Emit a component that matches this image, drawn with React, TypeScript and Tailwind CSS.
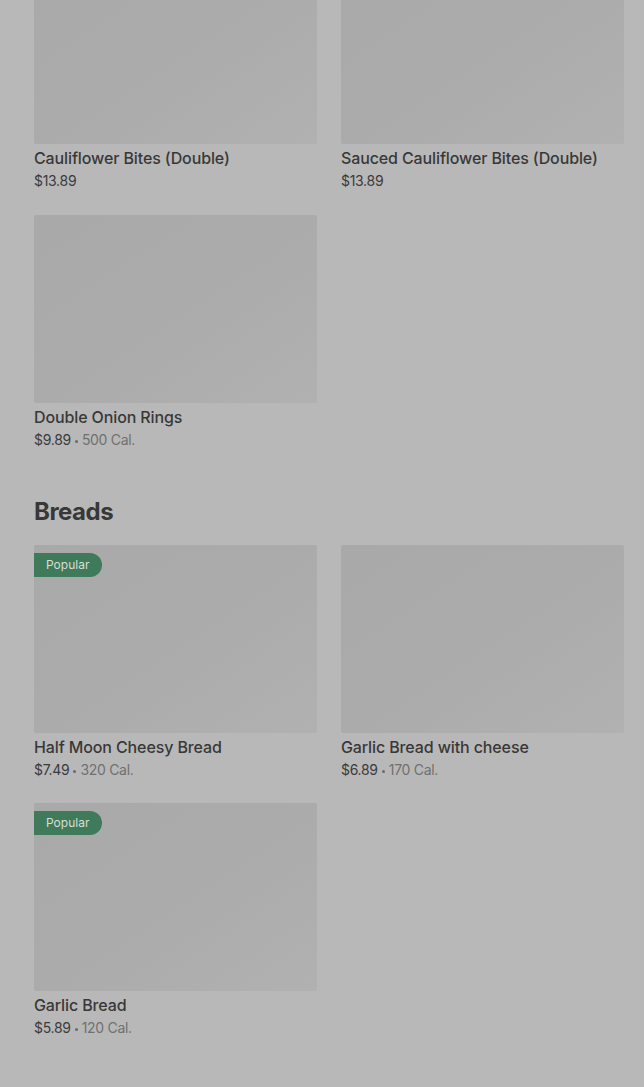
import React from "react";

type Item = { name: string; price: string; cal?: string; popular?: boolean };

const Card = ({ item }: { item: Item }) => (
  <div className="flex flex-col">
    <div className="relative h-[188px] w-full rounded-[2px] bg-gradient-to-br from-[#a9a9a9] via-[#ababab] to-[#b1b1b1]">
      {item.popular && (
        <div className="absolute left-0 top-[8px] flex h-[24px] items-center rounded-r-full bg-[#3f7a5b] pl-[12px] pr-[13px] text-[12px] text-[#d6dfda]">
          Popular
        </div>
      )}
    </div>
    <div className="pt-[3px]">
      <div className="h-[22px] text-[16px] font-medium leading-[22px] tracking-[-0.12px] text-[#383838]">{item.name}</div>
      <div className="h-[23px] text-[14px] leading-[24px] tracking-[-0.3px] text-[#3b3b3b]">
        {item.price}
        {item.cal && (
          <span className="text-[#707070]">
            <span className="mx-[4px] inline-block h-[3px] w-[3px] rounded-full bg-[#6a6a6a] align-middle" />
            {item.cal}
          </span>
        )}
      </div>
    </div>
  </div>
);

export default function App() {
  const top: Item[] = [
    { name: "Cauliflower Bites (Double)", price: "$13.89" },
    { name: "Sauced Cauliflower Bites (Double)", price: "$13.89" },
    { name: "Double Onion Rings", price: "$9.89", cal: "500 Cal." },
  ];
  const breads: Item[] = [
    { name: "Half Moon Cheesy Bread", price: "$7.49", cal: "320 Cal.", popular: true },
    { name: "Garlic Bread with cheese", price: "$6.89", cal: "170 Cal." },
    { name: "Garlic Bread", price: "$5.89", cal: "120 Cal.", popular: true },
  ];
  return (
    <div
      className="min-h-[1087px] w-full overflow-hidden bg-[#b8b8b8] pl-[34px] pr-[20px]"
      style={{ fontFamily: "Inter, Roboto, 'Noto Sans', sans-serif" }}
    >
      <div className="mt-[-44px] grid grid-cols-2 gap-x-[24px] gap-y-[23px]">
        {top.map((it) => (
          <Card key={it.name} item={it} />
        ))}
      </div>
      <h2 className="mt-[45px] mb-[17px] h-[32px] text-[24px] font-bold leading-[32px] tracking-[-0.5px] text-[#383838]">Breads</h2>
      <div className="grid grid-cols-2 gap-x-[24px] gap-y-[22px]">
        {breads.map((it) => (
          <Card key={it.name} item={it} />
        ))}
      </div>
    </div>
  );
}
